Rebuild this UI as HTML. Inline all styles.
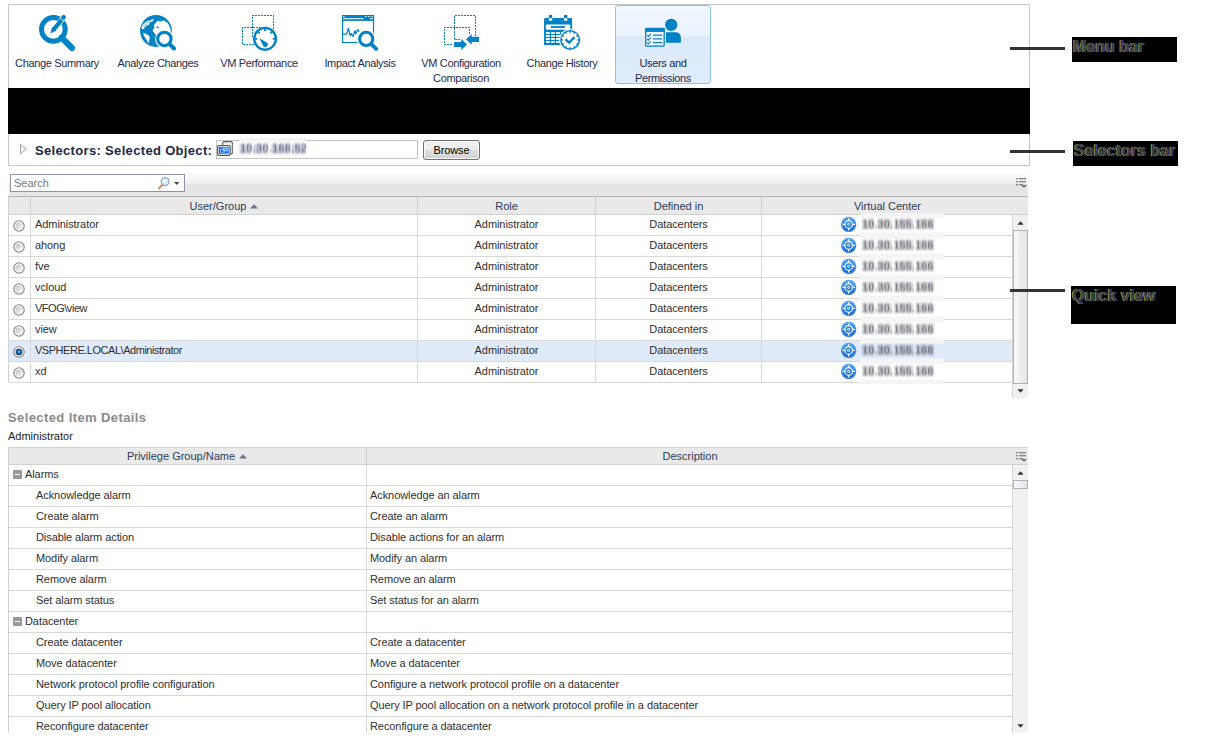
<!DOCTYPE html>
<html>
<head>
<meta charset="utf-8">
<title>Users and Permissions</title>
<style>
html,body{margin:0;padding:0;background:#fff;}
body{width:1206px;height:741px;position:relative;overflow:hidden;font-family:"Liberation Sans",sans-serif;font-size:11px;color:#333;}
.abs{position:absolute;}
/* top frame */
#frame{left:8px;top:4px;width:1020px;height:160px;border:1px solid #c6c6c6;box-sizing:content-box;}
#blackbar{left:8px;top:88px;width:1022px;height:46px;background:#000;}
/* menu */
.mi{top:5px;width:96px;height:79px;box-sizing:border-box;}
.mi svg{position:absolute;left:30px;top:10px;width:36px;height:36px;}
.mi .lb{position:absolute;left:-10px;width:116px;top:51px;text-align:center;line-height:15px;font-size:11px;color:#1f2c4c;letter-spacing:-.35px;}
.mi.sel{border:1px solid #8cc1e6;border-radius:3px;background:linear-gradient(#f1f7ff 0,#eaf3fe 38%,#dceafb 40%,#dfecfc 100%);}
.mi.sel svg{left:29px;top:9px;}
.mi.sel .lb{left:-11px;top:50px;}
/* callouts */
.cl{left:1010px;width:55px;height:3px;background:#333;}
.cb{background:#000;color:#3b3b3b;text-shadow:-.7px 0 0 rgba(235,235,30,.7),.7px 0 0 rgba(40,70,255,.75),.35px 0 0 rgba(255,40,40,.35),-.35px 0 0 rgba(40,230,255,.35);font-weight:bold;font-size:16px;line-height:18px;white-space:nowrap;}
.cb span{position:absolute;left:1px;top:1px;}
/* selectors bar */
#seltxt{left:35px;top:143px;font-size:13px;font-weight:bold;color:#20294a;letter-spacing:.33px;line-height:16px;white-space:nowrap;}
#selinput{left:216px;top:140px;width:200px;height:17px;border:1px solid #c3c3c3;background:#fff;}
#browse{left:423px;top:140px;width:55px;height:18px;border:1px solid #707070;border-radius:3px;background:linear-gradient(#f4f4f4 0,#ececec 48%,#dedede 52%,#d2d2d2 100%);box-shadow:inset 0 0 0 1px #fcfcfc;text-align:center;line-height:18px;font-size:11px;color:#000;letter-spacing:-.15px;}
/* toolbar */
.tb{left:9px;width:1019px;height:25px;background:linear-gradient(#ffffff 0,#f1f1f1 48%,#e4e4e4 52%,#e6e6e6 100%);}
#search{left:10px;top:174px;width:173px;height:16px;border:1px solid #8d94a8;background:#fff;}
#search span{position:absolute;left:3px;top:0;line-height:16px;font-size:11px;color:#777;}
/* grids */
.hdr{background:#e9e9e9;color:#2b3b5c;text-align:center;white-space:nowrap;}
.hc{position:absolute;top:0;height:17px;line-height:18.6px;text-align:center;border-left:1px solid #d2d2d2;box-sizing:border-box;}
.row{left:9px;height:20px;border-bottom:1px solid #d8d8d8;line-height:19px;white-space:nowrap;color:#303030;letter-spacing:-.08px;}
.row div{position:absolute;top:0;height:20px;}
.vl{width:1px;background:#d8d8d8;}
.c{text-align:center;}
.h2 .hc{line-height:16.6px;height:16px;}
.blur{filter:url(#vb);color:#50505c;font-weight:bold;}
.bk{position:absolute;height:10px;filter:blur(.9px);background:repeating-linear-gradient(90deg,rgba(70,70,84,.5) 0,rgba(70,70,84,.5) 1.2px,rgba(70,70,84,.12) 1.2px,rgba(70,70,84,.12) 2.9px);}
</style>
</head>
<body>
<svg width="0" height="0" style="position:absolute"><defs><filter id="vb" x="-10%" y="-70%" width="120%" height="240%"><feGaussianBlur stdDeviation="0.75 1.5"/></filter><linearGradient id="vg" x1="0" y1="0" x2="0" y2="1"><stop offset="0" stop-color="#4da3f5"/><stop offset="1" stop-color="#0a5fd6"/></linearGradient><linearGradient id="rg" x1="0" y1="0" x2="1" y2="1"><stop offset="0" stop-color="#bdbdbd"/><stop offset="1" stop-color="#fdfdfd"/></linearGradient><radialGradient id="rb" cx="0.5" cy="0.45" r="0.55"><stop offset="0" stop-color="#46baf2"/><stop offset="0.45" stop-color="#1c7fc8"/><stop offset="1" stop-color="#0b2f5e"/></radialGradient></defs></svg>
<div class="abs" id="frame"></div>
<div class="abs mi" style="left:9px"><svg viewBox="0 0 36 36" >
<circle cx="14.35" cy="14.3" r="11.85" fill="none" stroke="#0082c6" stroke-width="5"/>
<line x1="22.6" y1="22.6" x2="33" y2="33" stroke="#0082c6" stroke-width="6.1" stroke-linecap="round"/>
<line x1="19" y1="9.4" x2="24.8" y2="2.1" stroke="#fff" stroke-width="5.5" stroke-linecap="round"/>
<line x1="15.2" y1="14" x2="24.7" y2="2.2" stroke="#0082c6" stroke-width="4.3" stroke-linecap="round"/>
<path d="M11.9 17.9 L13.2 12.6 L16.9 15.6 Z" fill="#0082c6" stroke="#0082c6" stroke-width="0.6" stroke-linejoin="round"/>
<line x1="20.9" y1="2.7" x2="25.1" y2="6.1" stroke="#fff" stroke-width="0.9"/>
</svg><div class="lb">Change Summary</div></div>
<div class="abs mi" style="left:110px"><svg viewBox="0 0 36 36" >
<circle cx="16" cy="16" r="15.9" fill="#0082c6"/>
<path d="M1.9 13.8 L1.6 11.4 L3.7 8.5 L7.3 6.1 L10.8 4.9 L13.9 3.9 L13.3 5.8 L10.9 7.3 L8.8 7.6 L9.7 8.8 L7.9 10.3 L5.8 11.4 L4.3 13.2 L3.1 14.4 Z" fill="#fff"/>
<g fill="#0082c6"><rect x="5.2" y="8.6" width="1.2" height="1"/><rect x="7.4" y="7.2" width="1" height="0.9"/><rect x="3.6" y="10.8" width="1.1" height="1"/><rect x="9.6" y="5.8" width="1.2" height="0.8"/><rect x="6.2" y="10" width="0.9" height="0.8"/></g>
<path d="M3.1 18 L5.5 18.5 L9.1 20.8 L9.8 22.7 L8.9 26.9 L8.2 28.2 L6.1 23.9 L4 20.9 Z" fill="#fff"/>
<path d="M15.6 8 L16.8 6.4 L18.6 5.8 L19.8 6.7 L22.2 5.8 L24 5.5 L25.8 6.7 L27.6 7.9 L29 10.2 L30.2 13.2 L30.8 15.6 L31 18 L24 30 L16 20 L13.3 16.8 L12.6 15.6 L13.8 13.8 L14.4 12 L13.8 10.2 L15 8.8 Z" fill="#fff"/>
<path d="M16 11.4 L17.4 11.2 L18.8 12.2 L18.6 13.2 L17 12.8 Z" fill="#0082c6"/>
<circle cx="24.4" cy="23.9" r="9.4" fill="#fff"/>
<line x1="29" y1="28.4" x2="34.2" y2="33.6" stroke="#fff" stroke-width="6" stroke-linecap="round"/>
<circle cx="24.4" cy="23.9" r="6.7" fill="#fff" stroke="#0082c6" stroke-width="3.1"/>
<line x1="29.4" y1="28.9" x2="34" y2="33.5" stroke="#0082c6" stroke-width="4" stroke-linecap="round"/>
</svg><div class="lb">Analyze Changes</div></div>
<div class="abs mi" style="left:211px"><svg viewBox="0 0 36 36" >
<g fill="none" stroke="#0082c6" stroke-width="1" stroke-dasharray="2 1" shape-rendering="crispEdges">
<path d="M11.5 22 L11.5 0.5 L32.5 0.5 L32.5 14"/>
<path d="M20 12.5 L1.5 12.5 L1.5 29.5 L14 29.5"/>
</g>
<circle cx="24.05" cy="23.8" r="12" fill="#fff"/>
<circle cx="24.05" cy="23.8" r="10.9" fill="#fff" stroke="#0082c6" stroke-width="2.4"/>
<g stroke="#0082c6" stroke-width="1.7">
<line x1="24.05" y1="13.6" x2="24.05" y2="16.2"/><line x1="13.8" y1="23.8" x2="16.4" y2="23.8"/><line x1="34.3" y1="23.8" x2="31.7" y2="23.8"/>
<line x1="16.9" y1="16.6" x2="18.7" y2="18.4"/><line x1="31.2" y1="16.6" x2="29.4" y2="18.4"/>
</g>
<path d="M18.3 23.2 L26.2 27.7 A2.5 2.5 0 1 1 22.4 31.2 Z" fill="#0082c6"/>
</svg><div class="lb">VM Performance</div></div>
<div class="abs mi" style="left:312px"><svg viewBox="0 0 36 36" >
<rect x="0.6" y="0.6" width="30.9" height="27" fill="#fff" stroke="#0082c6" stroke-width="1.2"/>
<rect x="0" y="0" width="32.1" height="5.9" fill="#0082c6"/>
<g fill="#fff"><rect x="1" y="1.25" width="1.8" height="0.85"/><rect x="23" y="1.25" width="1.8" height="0.85"/><rect x="26" y="1.25" width="1.8" height="0.85"/><rect x="29" y="1.25" width="1.8" height="0.85"/>
<rect x="1" y="3.2" width="20.5" height="1"/><rect x="28" y="3.2" width="2.8" height="1"/></g>
<path d="M1 19.1 L4.7 19.1 L6.4 13.3 L8.2 20.6 L9.4 18.7 L11.1 21.5 L12.9 15.6 L13.8 18.8 L15.9 14.7 L17.2 16.6" fill="none" stroke="#0082c6" stroke-width="1.3" stroke-linejoin="round"/>
<circle cx="24.2" cy="23.9" r="9.3" fill="#fff"/>
<line x1="29" y1="28.6" x2="34.2" y2="33.9" stroke="#fff" stroke-width="6" stroke-linecap="round"/>
<circle cx="24.2" cy="23.9" r="6.6" fill="#fff" stroke="#0082c6" stroke-width="3.1"/>
<line x1="29.2" y1="28.9" x2="34.1" y2="33.8" stroke="#0082c6" stroke-width="3.9" stroke-linecap="round"/>
</svg><div class="lb">Impact Analysis</div></div>
<div class="abs mi" style="left:413px"><svg viewBox="0 0 36 36" >
<g fill="none" stroke="#0082c6" stroke-width="1" stroke-dasharray="2 1" shape-rendering="crispEdges">
<path d="M32.5 20.6 L32.5 0.5 L11.5 0.5 L11.5 24.5 L18 24.5"/>
<path d="M26.5 19 L26.5 12.5 L1.5 12.5 L1.5 29.5 L10.4 29.5"/>
</g>
<path d="M11.1 27 L18.3 27 L18.3 24.1 L24 29.5 L18.3 34.9 L18.3 32 L11.1 32 Z" fill="#0082c6"/>
<path d="M36.1 21.8 L28.7 21.8 L28.7 18.9 L23 24.35 L28.7 29.8 L28.7 26.9 L36.1 26.9 Z" fill="#0082c6"/>
</svg><div class="lb">VM Configuration<br>Comparison</div></div>
<div class="abs mi" style="left:514px"><svg viewBox="0 0 36 36" >
<path d="M0.05 4.4 Q0.05 3 1.45 3 L26.7 3 Q28.1 3 28.1 4.4 L28.1 30 L0.05 30 Z" fill="#0082c6"/>
<rect x="4.9" y="-0.1" width="3.3" height="3.2" fill="#0082c6"/><rect x="20" y="-0.1" width="3.3" height="3.2" fill="#0082c6"/>
<rect x="4.9" y="3.1" width="3.3" height="2.7" fill="#f2f8fc"/><rect x="20" y="3.1" width="3.3" height="2.7" fill="#f2f8fc"/>
<rect x="1.9" y="9.4" width="24.4" height="5.3" rx="0.8" fill="#fff"/>
<rect x="7" y="11.1" width="13.9" height="1.8" fill="#0082c6"/>
<g fill="#fff"><rect x="1.90" y="17.10" width="3.9" height="1.85"/><rect x="6.95" y="17.10" width="3.9" height="1.85"/><rect x="12.00" y="17.10" width="3.9" height="1.85"/><rect x="17.05" y="17.10" width="3.9" height="1.85"/><rect x="1.90" y="20.07" width="3.9" height="1.85"/><rect x="6.95" y="20.07" width="3.9" height="1.85"/><rect x="12.00" y="20.07" width="3.9" height="1.85"/><rect x="17.05" y="20.07" width="3.9" height="1.85"/><rect x="1.90" y="23.04" width="3.9" height="1.85"/><rect x="6.95" y="23.04" width="3.9" height="1.85"/><rect x="12.00" y="23.04" width="3.9" height="1.85"/><rect x="17.05" y="23.04" width="3.9" height="1.85"/><rect x="1.90" y="26.01" width="3.9" height="1.85"/><rect x="6.95" y="26.01" width="3.9" height="1.85"/><rect x="12.00" y="26.01" width="3.9" height="1.85"/><rect x="17.05" y="26.01" width="3.9" height="1.85"/></g>
<circle cx="26.1" cy="24.95" r="10.9" fill="#fff"/>
<circle cx="26.1" cy="24.95" r="9.3" fill="#fff" stroke="#0082c6" stroke-width="1.4"/>
<g stroke="#0082c6" stroke-width="1.5"><line x1="26.10" y1="15.75" x2="26.10" y2="17.65"/><line x1="30.70" y1="16.98" x2="29.75" y2="18.63"/><line x1="34.07" y1="20.35" x2="32.42" y2="21.30"/><line x1="35.30" y1="24.95" x2="33.40" y2="24.95"/><line x1="34.07" y1="29.55" x2="32.42" y2="28.60"/><line x1="30.70" y1="32.92" x2="29.75" y2="31.27"/><line x1="26.10" y1="34.15" x2="26.10" y2="32.25"/><line x1="21.50" y1="32.92" x2="22.45" y2="31.27"/><line x1="18.13" y1="29.55" x2="19.78" y2="28.60"/><line x1="16.90" y1="24.95" x2="18.80" y2="24.95"/><line x1="18.13" y1="20.35" x2="19.78" y2="21.30"/><line x1="21.50" y1="16.98" x2="22.45" y2="18.63"/></g>
<path d="M21.6 24.4 L25.1 27.7 L30.4 22.1" fill="none" stroke="#0082c6" stroke-width="2.3"/>
</svg><div class="lb">Change History</div></div>
<div class="abs mi sel" style="left:615px"><svg viewBox="0 0 36 36" >
<circle cx="26.2" cy="9.9" r="6.1" fill="#0082c6"/>
<path d="M20.7 17.2 L30.4 17.2 Q35.9 17.2 35.9 22.7 L35.9 27.75 L20.7 27.75 Z" fill="#0082c6"/>
<rect x="19.6" y="12.6" width="1.1" height="19.4" fill="#fff" fill-opacity="0.9"/>
<rect x="0.7" y="13.5" width="18.5" height="17.7" rx="1" fill="#fff" fill-opacity="0.35" stroke="#0082c6" stroke-width="1.3"/>
<rect x="0.3" y="13" width="19.3" height="3.9" fill="#0082c6"/>
<g fill="#0082c6"><rect x="8" y="19.6" width="9.1" height="1.2"/><rect x="8" y="23.3" width="9.1" height="1.2"/><rect x="8" y="27" width="9.1" height="1.2"/></g>
<g fill="none" stroke="#0082c6" stroke-width="1.1"><path d="M2.2 20.2 L3.4 21.4 L5.6 18.9"/><path d="M2.2 23.9 L3.4 25.1 L5.6 22.6"/><path d="M2.2 27.6 L3.4 28.8 L5.6 26.3"/></g>
</svg><div class="lb">Users and<br>Permissions</div></div>
<div class="abs" id="blackbar"></div>

<svg class="abs" style="left:19px;top:143px" width="9" height="12" viewBox="0 0 9 12"><path d="M1.5 1.2 L7 6 L1.5 10.8 Z" fill="#f2f2f2" stroke="#a8a8a8" stroke-width="1"/></svg>
<div class="abs" id="seltxt">Selectors: Selected Object:</div>
<div class="abs" id="selinput"></div>
<svg class="abs" style="left:217px;top:141px" width="17" height="16" viewBox="0 0 17 16">
<rect x="5.8" y="0.6" width="9.5" height="12.4" rx="1.1" fill="#fff" stroke="#5e5e5e" stroke-width="1.1"/>
<rect x="7.2" y="2.4" width="6.6" height="0.8" fill="#dcdcdc"/>
<rect x="0.6" y="4.6" width="12.6" height="9.8" rx="1.4" fill="#fff" stroke="#555" stroke-width="1.2"/>
<linearGradient id="vmg" x1="0" y1="1" x2="1" y2="0"><stop offset="0" stop-color="#0a52de"/><stop offset="1" stop-color="#3f92ff"/></linearGradient>
<rect x="1.9" y="6" width="10" height="6.7" fill="url(#vmg)"/>
<rect x="3.4" y="8.4" width="4" height="2.8" fill="none" stroke="#9fd0ff" stroke-width="0.7"/>
<rect x="6.6" y="7" width="3.6" height="2.8" fill="#4aa0ff" stroke="#b8deff" stroke-width="0.7"/>
</svg>
<div class="abs" style="left:239px;top:138px;width:67px;height:17px;background:linear-gradient(#f3f3f3 0,#f6f6f6 3px,#fdfdfd 4px,#fff 100%)"></div>
<div class="abs blur" style="left:240px;top:142px;line-height:13px;font-size:11px;white-space:nowrap;color:#4a5276;letter-spacing:.25px;opacity:.7">10.30.168.52</div>
<div class="bk" style="left:240px;top:144px;width:11px;background:repeating-linear-gradient(90deg,rgba(70,78,120,.5) 0,rgba(70,78,120,.5) 1.2px,rgba(70,78,120,.12) 1.2px,rgba(70,78,120,.12) 2.9px)"></div><div class="bk" style="left:254px;top:144px;width:13px;background:repeating-linear-gradient(90deg,rgba(70,78,120,.5) 0,rgba(70,78,120,.5) 1.2px,rgba(70,78,120,.12) 1.2px,rgba(70,78,120,.12) 2.9px)"></div><div class="bk" style="left:272px;top:144px;width:17px;background:repeating-linear-gradient(90deg,rgba(70,78,120,.5) 0,rgba(70,78,120,.5) 1.2px,rgba(70,78,120,.12) 1.2px,rgba(70,78,120,.12) 2.9px)"></div><div class="bk" style="left:292px;top:144px;width:13px;background:repeating-linear-gradient(90deg,rgba(70,78,120,.5) 0,rgba(70,78,120,.5) 1.2px,rgba(70,78,120,.12) 1.2px,rgba(70,78,120,.12) 2.9px)"></div>
<div class="abs" id="browse">Browse</div>

<div class="abs tb" style="top:171px"></div>
<div class="abs" id="search"><span>Search</span>
<svg style="position:absolute;left:146px;top:1px" width="15" height="15" viewBox="0 0 15 15"><line x1="1.8" y1="12.6" x2="5.6" y2="8.6" stroke="#d9822b" stroke-width="1.7" stroke-linecap="round"/><circle cx="8.1" cy="5.6" r="3.9" fill="#dcefff" stroke="#8096c8" stroke-width="1.1"/><circle cx="7.5" cy="4.8" r="1.6" fill="#f4faff"/></svg>
<svg style="position:absolute;left:163px;top:7px" width="6" height="4" viewBox="0 0 6 4"><path d="M0 0 L5.4 0 L2.7 3.1 Z" fill="#444"/></svg>
</div>
<svg class="abs" style="left:1016px;top:177px" width="11" height="12" viewBox="0 0 11 12"><g fill="#8a8a8a"><rect x="0" y="1" width="2" height="1.4"/><rect x="3" y="1" width="7" height="1.4"/><rect x="0" y="4" width="2" height="1.4"/><rect x="3" y="4" width="7" height="1.4"/><rect x="0" y="7" width="2" height="1.4"/><rect x="3" y="7" width="4" height="1.4"/></g><path d="M5 8 L11 8 L8 11 Z" fill="#777"/></svg>
<div class="abs" style="left:8px;top:196px;width:1020px;height:1px;background:#b3b3b3"></div>
<div class="abs hdr" style="left:8px;top:197px;width:1020px;height:17px;border-bottom:1px solid #d0d0d0"><div class="hc" style="left:22px;width:387px">User/Group<svg width="8" height="5" viewBox="0 0 8 5" style="margin-left:4px;vertical-align:1px"><path d="M0 4.5 L4 0.3 L8 4.5 Z" fill="#6a7690"/></svg></div><div class="hc" style="left:409px;width:178px">Role</div><div class="hc" style="left:587px;width:166px">Defined in</div><div class="hc" style="left:753px;width:252px">Virtual Center</div></div>
<div class="abs" style="left:8px;top:197px;width:1px;height:186px;background:#d2d2d2"></div>
<div class="abs row" style="top:215px;width:1004px;"><div style="left:0;width:21px"><svg style="position:absolute;left:4px;top:4.5px" width="12" height="12" viewBox="0 0 12 12"><circle cx="6" cy="6" r="5.2" fill="#fdfdfd" stroke="#838383" stroke-width="1.1"/><circle cx="6" cy="6" r="3.6" fill="url(#rg)"/></svg></div><div style="left:26px;">Administrator</div><div class="c" style="left:409px;width:177px">Administrator</div><div class="c" style="left:587px;width:165px">Datacenters</div><div style="left:832px;width:110px"><svg style="position:absolute;left:0;top:1px" width="16" height="17" viewBox="0 0 16 17"><g transform="translate(-0.3,0.4)"><circle cx="8" cy="8" r="7.6" fill="url(#vg)"/><circle cx="8" cy="8" r="6.6" fill="none" stroke="#7fc0ff" stroke-opacity=".45" stroke-width="0.8"/><circle cx="8" cy="8" r="3.8" fill="none" stroke="#fff" stroke-width="1.15"/><circle cx="8" cy="8" r="1.45" fill="#fff"/><circle cx="8" cy="8" r="0.65" fill="#1a6fe0"/><g stroke="#fff" stroke-width="1.25"><line x1="8" y1="1.9" x2="8" y2="4.4"/><line x1="8" y1="11.6" x2="8" y2="14.1"/><line x1="1.9" y1="8" x2="4.4" y2="8"/><line x1="11.6" y1="8" x2="14.1" y2="8"/></g></g></svg></div></div>
<div class="abs" style="left:860px;top:213px;width:84px;height:24px;background:linear-gradient(#f5f5f5 0,#f5f5f5 4px,#fff 5px,#fff 19px,#f5f5f5 20px,#f5f5f5 100%)"></div><div class="abs blur" style="left:862px;top:218px;line-height:13px;white-space:nowrap;font-size:11px;letter-spacing:.1px;opacity:.65">10.30.155.166</div><div class="bk" style="left:863px;top:219px;width:11px"></div><div class="bk" style="left:878px;top:219px;width:13px"></div><div class="bk" style="left:896px;top:219px;width:17px"></div><div class="bk" style="left:917px;top:219px;width:17px"></div>
<div class="abs row" style="top:236px;width:1004px;"><div style="left:0;width:21px"><svg style="position:absolute;left:4px;top:4.5px" width="12" height="12" viewBox="0 0 12 12"><circle cx="6" cy="6" r="5.2" fill="#fdfdfd" stroke="#838383" stroke-width="1.1"/><circle cx="6" cy="6" r="3.6" fill="url(#rg)"/></svg></div><div style="left:26px;">ahong</div><div class="c" style="left:409px;width:177px">Administrator</div><div class="c" style="left:587px;width:165px">Datacenters</div><div style="left:832px;width:110px"><svg style="position:absolute;left:0;top:1px" width="16" height="17" viewBox="0 0 16 17"><g transform="translate(-0.3,0.4)"><circle cx="8" cy="8" r="7.6" fill="url(#vg)"/><circle cx="8" cy="8" r="6.6" fill="none" stroke="#7fc0ff" stroke-opacity=".45" stroke-width="0.8"/><circle cx="8" cy="8" r="3.8" fill="none" stroke="#fff" stroke-width="1.15"/><circle cx="8" cy="8" r="1.45" fill="#fff"/><circle cx="8" cy="8" r="0.65" fill="#1a6fe0"/><g stroke="#fff" stroke-width="1.25"><line x1="8" y1="1.9" x2="8" y2="4.4"/><line x1="8" y1="11.6" x2="8" y2="14.1"/><line x1="1.9" y1="8" x2="4.4" y2="8"/><line x1="11.6" y1="8" x2="14.1" y2="8"/></g></g></svg></div></div>
<div class="abs" style="left:860px;top:234px;width:84px;height:24px;background:linear-gradient(#f5f5f5 0,#f5f5f5 4px,#fff 5px,#fff 19px,#f5f5f5 20px,#f5f5f5 100%)"></div><div class="abs blur" style="left:862px;top:239px;line-height:13px;white-space:nowrap;font-size:11px;letter-spacing:.1px;opacity:.65">10.30.155.166</div><div class="bk" style="left:863px;top:240px;width:11px"></div><div class="bk" style="left:878px;top:240px;width:13px"></div><div class="bk" style="left:896px;top:240px;width:17px"></div><div class="bk" style="left:917px;top:240px;width:17px"></div>
<div class="abs row" style="top:257px;width:1004px;"><div style="left:0;width:21px"><svg style="position:absolute;left:4px;top:4.5px" width="12" height="12" viewBox="0 0 12 12"><circle cx="6" cy="6" r="5.2" fill="#fdfdfd" stroke="#838383" stroke-width="1.1"/><circle cx="6" cy="6" r="3.6" fill="url(#rg)"/></svg></div><div style="left:26px;">fve</div><div class="c" style="left:409px;width:177px">Administrator</div><div class="c" style="left:587px;width:165px">Datacenters</div><div style="left:832px;width:110px"><svg style="position:absolute;left:0;top:1px" width="16" height="17" viewBox="0 0 16 17"><g transform="translate(-0.3,0.4)"><circle cx="8" cy="8" r="7.6" fill="url(#vg)"/><circle cx="8" cy="8" r="6.6" fill="none" stroke="#7fc0ff" stroke-opacity=".45" stroke-width="0.8"/><circle cx="8" cy="8" r="3.8" fill="none" stroke="#fff" stroke-width="1.15"/><circle cx="8" cy="8" r="1.45" fill="#fff"/><circle cx="8" cy="8" r="0.65" fill="#1a6fe0"/><g stroke="#fff" stroke-width="1.25"><line x1="8" y1="1.9" x2="8" y2="4.4"/><line x1="8" y1="11.6" x2="8" y2="14.1"/><line x1="1.9" y1="8" x2="4.4" y2="8"/><line x1="11.6" y1="8" x2="14.1" y2="8"/></g></g></svg></div></div>
<div class="abs" style="left:860px;top:255px;width:84px;height:24px;background:linear-gradient(#f5f5f5 0,#f5f5f5 4px,#fff 5px,#fff 19px,#f5f5f5 20px,#f5f5f5 100%)"></div><div class="abs blur" style="left:862px;top:260px;line-height:13px;white-space:nowrap;font-size:11px;letter-spacing:.1px;opacity:.65">10.30.155.166</div><div class="bk" style="left:863px;top:261px;width:11px"></div><div class="bk" style="left:878px;top:261px;width:13px"></div><div class="bk" style="left:896px;top:261px;width:17px"></div><div class="bk" style="left:917px;top:261px;width:17px"></div>
<div class="abs row" style="top:278px;width:1004px;"><div style="left:0;width:21px"><svg style="position:absolute;left:4px;top:4.5px" width="12" height="12" viewBox="0 0 12 12"><circle cx="6" cy="6" r="5.2" fill="#fdfdfd" stroke="#838383" stroke-width="1.1"/><circle cx="6" cy="6" r="3.6" fill="url(#rg)"/></svg></div><div style="left:26px;">vcloud</div><div class="c" style="left:409px;width:177px">Administrator</div><div class="c" style="left:587px;width:165px">Datacenters</div><div style="left:832px;width:110px"><svg style="position:absolute;left:0;top:1px" width="16" height="17" viewBox="0 0 16 17"><g transform="translate(-0.3,0.4)"><circle cx="8" cy="8" r="7.6" fill="url(#vg)"/><circle cx="8" cy="8" r="6.6" fill="none" stroke="#7fc0ff" stroke-opacity=".45" stroke-width="0.8"/><circle cx="8" cy="8" r="3.8" fill="none" stroke="#fff" stroke-width="1.15"/><circle cx="8" cy="8" r="1.45" fill="#fff"/><circle cx="8" cy="8" r="0.65" fill="#1a6fe0"/><g stroke="#fff" stroke-width="1.25"><line x1="8" y1="1.9" x2="8" y2="4.4"/><line x1="8" y1="11.6" x2="8" y2="14.1"/><line x1="1.9" y1="8" x2="4.4" y2="8"/><line x1="11.6" y1="8" x2="14.1" y2="8"/></g></g></svg></div></div>
<div class="abs" style="left:860px;top:276px;width:84px;height:24px;background:linear-gradient(#f5f5f5 0,#f5f5f5 4px,#fff 5px,#fff 19px,#f5f5f5 20px,#f5f5f5 100%)"></div><div class="abs blur" style="left:862px;top:281px;line-height:13px;white-space:nowrap;font-size:11px;letter-spacing:.1px;opacity:.65">10.30.155.166</div><div class="bk" style="left:863px;top:282px;width:11px"></div><div class="bk" style="left:878px;top:282px;width:13px"></div><div class="bk" style="left:896px;top:282px;width:17px"></div><div class="bk" style="left:917px;top:282px;width:17px"></div>
<div class="abs row" style="top:299px;width:1004px;"><div style="left:0;width:21px"><svg style="position:absolute;left:4px;top:4.5px" width="12" height="12" viewBox="0 0 12 12"><circle cx="6" cy="6" r="5.2" fill="#fdfdfd" stroke="#838383" stroke-width="1.1"/><circle cx="6" cy="6" r="3.6" fill="url(#rg)"/></svg></div><div style="left:26px;letter-spacing:-.47px;">VFOG\view</div><div class="c" style="left:409px;width:177px">Administrator</div><div class="c" style="left:587px;width:165px">Datacenters</div><div style="left:832px;width:110px"><svg style="position:absolute;left:0;top:1px" width="16" height="17" viewBox="0 0 16 17"><g transform="translate(-0.3,0.4)"><circle cx="8" cy="8" r="7.6" fill="url(#vg)"/><circle cx="8" cy="8" r="6.6" fill="none" stroke="#7fc0ff" stroke-opacity=".45" stroke-width="0.8"/><circle cx="8" cy="8" r="3.8" fill="none" stroke="#fff" stroke-width="1.15"/><circle cx="8" cy="8" r="1.45" fill="#fff"/><circle cx="8" cy="8" r="0.65" fill="#1a6fe0"/><g stroke="#fff" stroke-width="1.25"><line x1="8" y1="1.9" x2="8" y2="4.4"/><line x1="8" y1="11.6" x2="8" y2="14.1"/><line x1="1.9" y1="8" x2="4.4" y2="8"/><line x1="11.6" y1="8" x2="14.1" y2="8"/></g></g></svg></div></div>
<div class="abs" style="left:860px;top:297px;width:84px;height:24px;background:linear-gradient(#f5f5f5 0,#f5f5f5 4px,#fff 5px,#fff 19px,#f5f5f5 20px,#f5f5f5 100%)"></div><div class="abs blur" style="left:862px;top:302px;line-height:13px;white-space:nowrap;font-size:11px;letter-spacing:.1px;opacity:.65">10.30.155.166</div><div class="bk" style="left:863px;top:303px;width:11px"></div><div class="bk" style="left:878px;top:303px;width:13px"></div><div class="bk" style="left:896px;top:303px;width:17px"></div><div class="bk" style="left:917px;top:303px;width:17px"></div>
<div class="abs row" style="top:320px;width:1004px;"><div style="left:0;width:21px"><svg style="position:absolute;left:4px;top:4.5px" width="12" height="12" viewBox="0 0 12 12"><circle cx="6" cy="6" r="5.2" fill="#fdfdfd" stroke="#838383" stroke-width="1.1"/><circle cx="6" cy="6" r="3.6" fill="url(#rg)"/></svg></div><div style="left:26px;">view</div><div class="c" style="left:409px;width:177px">Administrator</div><div class="c" style="left:587px;width:165px">Datacenters</div><div style="left:832px;width:110px"><svg style="position:absolute;left:0;top:1px" width="16" height="17" viewBox="0 0 16 17"><g transform="translate(-0.3,0.4)"><circle cx="8" cy="8" r="7.6" fill="url(#vg)"/><circle cx="8" cy="8" r="6.6" fill="none" stroke="#7fc0ff" stroke-opacity=".45" stroke-width="0.8"/><circle cx="8" cy="8" r="3.8" fill="none" stroke="#fff" stroke-width="1.15"/><circle cx="8" cy="8" r="1.45" fill="#fff"/><circle cx="8" cy="8" r="0.65" fill="#1a6fe0"/><g stroke="#fff" stroke-width="1.25"><line x1="8" y1="1.9" x2="8" y2="4.4"/><line x1="8" y1="11.6" x2="8" y2="14.1"/><line x1="1.9" y1="8" x2="4.4" y2="8"/><line x1="11.6" y1="8" x2="14.1" y2="8"/></g></g></svg></div></div>
<div class="abs" style="left:860px;top:318px;width:84px;height:24px;background:linear-gradient(#f5f5f5 0,#f5f5f5 4px,#fff 5px,#fff 19px,#f5f5f5 20px,#f5f5f5 100%)"></div><div class="abs blur" style="left:862px;top:323px;line-height:13px;white-space:nowrap;font-size:11px;letter-spacing:.1px;opacity:.65">10.30.155.166</div><div class="bk" style="left:863px;top:324px;width:11px"></div><div class="bk" style="left:878px;top:324px;width:13px"></div><div class="bk" style="left:896px;top:324px;width:17px"></div><div class="bk" style="left:917px;top:324px;width:17px"></div>
<div class="abs row" style="top:341px;width:1004px;background:#dfeafb;"><div style="left:0;width:21px"><svg style="position:absolute;left:4px;top:4.5px" width="12" height="12" viewBox="0 0 12 12"><circle cx="6" cy="6" r="5.2" fill="#fdfdfd" stroke="#838383" stroke-width="1.1"/><circle cx="6" cy="6" r="3.6" fill="url(#rg)"/><circle cx="6" cy="6" r="3" fill="url(#rb)" stroke="#0c2c58" stroke-width="0.7"/></svg></div><div style="left:26px;letter-spacing:-.47px;">VSPHERE.LOCAL\Administrator</div><div class="c" style="left:409px;width:177px">Administrator</div><div class="c" style="left:587px;width:165px">Datacenters</div><div style="left:832px;width:110px"><svg style="position:absolute;left:0;top:1px" width="16" height="17" viewBox="0 0 16 17"><g transform="translate(-0.3,0.4)"><circle cx="8" cy="8" r="7.6" fill="url(#vg)"/><circle cx="8" cy="8" r="6.6" fill="none" stroke="#7fc0ff" stroke-opacity=".45" stroke-width="0.8"/><circle cx="8" cy="8" r="3.8" fill="none" stroke="#fff" stroke-width="1.15"/><circle cx="8" cy="8" r="1.45" fill="#fff"/><circle cx="8" cy="8" r="0.65" fill="#1a6fe0"/><g stroke="#fff" stroke-width="1.25"><line x1="8" y1="1.9" x2="8" y2="4.4"/><line x1="8" y1="11.6" x2="8" y2="14.1"/><line x1="1.9" y1="8" x2="4.4" y2="8"/><line x1="11.6" y1="8" x2="14.1" y2="8"/></g></g></svg></div></div>
<div class="abs" style="left:860px;top:339px;width:84px;height:24px;background:linear-gradient(#f5f5f5 0,#f5f5f5 4px,#dfeafb 5px,#dfeafb 19px,#f5f5f5 20px,#f5f5f5 100%)"></div><div class="abs blur" style="left:862px;top:344px;line-height:13px;white-space:nowrap;font-size:11px;letter-spacing:.1px;opacity:.65">10.30.155.166</div><div class="bk" style="left:863px;top:345px;width:11px"></div><div class="bk" style="left:878px;top:345px;width:13px"></div><div class="bk" style="left:896px;top:345px;width:17px"></div><div class="bk" style="left:917px;top:345px;width:17px"></div>
<div class="abs row" style="top:362px;width:1004px;"><div style="left:0;width:21px"><svg style="position:absolute;left:4px;top:4.5px" width="12" height="12" viewBox="0 0 12 12"><circle cx="6" cy="6" r="5.2" fill="#fdfdfd" stroke="#838383" stroke-width="1.1"/><circle cx="6" cy="6" r="3.6" fill="url(#rg)"/></svg></div><div style="left:26px;">xd</div><div class="c" style="left:409px;width:177px">Administrator</div><div class="c" style="left:587px;width:165px">Datacenters</div><div style="left:832px;width:110px"><svg style="position:absolute;left:0;top:1px" width="16" height="17" viewBox="0 0 16 17"><g transform="translate(-0.3,0.4)"><circle cx="8" cy="8" r="7.6" fill="url(#vg)"/><circle cx="8" cy="8" r="6.6" fill="none" stroke="#7fc0ff" stroke-opacity=".45" stroke-width="0.8"/><circle cx="8" cy="8" r="3.8" fill="none" stroke="#fff" stroke-width="1.15"/><circle cx="8" cy="8" r="1.45" fill="#fff"/><circle cx="8" cy="8" r="0.65" fill="#1a6fe0"/><g stroke="#fff" stroke-width="1.25"><line x1="8" y1="1.9" x2="8" y2="4.4"/><line x1="8" y1="11.6" x2="8" y2="14.1"/><line x1="1.9" y1="8" x2="4.4" y2="8"/><line x1="11.6" y1="8" x2="14.1" y2="8"/></g></g></svg></div></div>
<div class="abs" style="left:860px;top:360px;width:84px;height:24px;background:linear-gradient(#f5f5f5 0,#f5f5f5 4px,#fff 5px,#fff 19px,#f5f5f5 20px,#f5f5f5 100%)"></div><div class="abs blur" style="left:862px;top:365px;line-height:13px;white-space:nowrap;font-size:11px;letter-spacing:.1px;opacity:.65">10.30.155.166</div><div class="bk" style="left:863px;top:366px;width:11px"></div><div class="bk" style="left:878px;top:366px;width:13px"></div><div class="bk" style="left:896px;top:366px;width:17px"></div><div class="bk" style="left:917px;top:366px;width:17px"></div>
<div class="abs vl" style="left:30px;top:215px;height:168px"></div><div class="abs vl" style="left:417px;top:215px;height:168px"></div><div class="abs vl" style="left:595px;top:215px;height:168px"></div><div class="abs vl" style="left:761px;top:215px;height:168px"></div>
<div class="abs" style="left:1012px;top:215px;width:15px;height:183px;background:#f1f1f1;border-left:1px solid #d6d6d6;box-sizing:content-box"></div><svg class="abs" style="left:1017px;top:221px" width="7" height="4" viewBox="0 0 7 4"><path d="M0.4 3.8 L3.5 0.3 L6.6 3.8 Z" fill="#333"/></svg><svg class="abs" style="left:1017px;top:389px" width="7" height="4" viewBox="0 0 7 4"><path d="M0.4 0.2 L3.5 3.7 L6.6 0.2 Z" fill="#333"/></svg><div class="abs" style="left:1013px;top:230px;width:13px;height:152px;border:1px solid #aab0c0;background:linear-gradient(90deg,#fafafa 0,#eeeeee 50%,#e6e6e6 100%)"></div>

<div class="abs" style="left:8px;top:410px;font-size:13px;font-weight:bold;color:#8b8b8b;letter-spacing:.4px;line-height:16px;white-space:nowrap">Selected Item Details</div>
<div class="abs" style="left:8px;top:430px;line-height:13px;color:#222;white-space:nowrap">Administrator</div>
<div class="abs hdr h2" style="left:8px;top:447px;width:1020px;height:16px;border-top:1px solid #d0d0d0;border-bottom:1px solid #d0d0d0"><div class="hc" style="left:0;width:358px;border-left:0">Privilege Group/Name<svg width="8" height="5" viewBox="0 0 8 5" style="margin-left:4px;vertical-align:1px"><path d="M0 4.5 L4 0.3 L8 4.5 Z" fill="#6a7690"/></svg></div><div class="hc" style="left:358px;width:647px">Description</div></div>
<svg class="abs" style="left:1016px;top:451px" width="11" height="12" viewBox="0 0 11 12"><g fill="#8a8a8a"><rect x="0" y="1" width="2" height="1.4"/><rect x="3" y="1" width="7" height="1.4"/><rect x="0" y="4" width="2" height="1.4"/><rect x="3" y="4" width="7" height="1.4"/><rect x="0" y="7" width="2" height="1.4"/><rect x="3" y="7" width="4" height="1.4"/></g><path d="M5 8 L11 8 L8 11 Z" fill="#777"/></svg>
<div class="abs" style="left:8px;top:448px;width:1px;height:285px;background:#d2d2d2"></div>
<div class="abs" style="left:0;top:465px;width:1030px;height:268px;overflow:hidden"><div class="abs row" style="top:0px;width:1004px"><div style="left:16px"><span style="position:absolute;left:-12px;top:5px;width:9px;height:9px;background:#999;border-radius:1px"><span style="position:absolute;left:2px;top:4px;width:5px;height:1px;background:#fff"></span></span>Alarms</div></div><div class="abs row" style="top:21px;width:1004px"><div style="left:27px">Acknowledge alarm</div><div style="left:361px">Acknowledge an alarm</div></div><div class="abs row" style="top:42px;width:1004px"><div style="left:27px">Create alarm</div><div style="left:361px">Create an alarm</div></div><div class="abs row" style="top:63px;width:1004px"><div style="left:27px">Disable alarm action</div><div style="left:361px">Disable actions for an alarm</div></div><div class="abs row" style="top:84px;width:1004px"><div style="left:27px">Modify alarm</div><div style="left:361px">Modify an alarm</div></div><div class="abs row" style="top:105px;width:1004px"><div style="left:27px">Remove alarm</div><div style="left:361px">Remove an alarm</div></div><div class="abs row" style="top:126px;width:1004px"><div style="left:27px">Set alarm status</div><div style="left:361px">Set status for an alarm</div></div><div class="abs row" style="top:147px;width:1004px"><div style="left:16px"><span style="position:absolute;left:-12px;top:5px;width:9px;height:9px;background:#999;border-radius:1px"><span style="position:absolute;left:2px;top:4px;width:5px;height:1px;background:#fff"></span></span>Datacenter</div></div><div class="abs row" style="top:168px;width:1004px"><div style="left:27px">Create datacenter</div><div style="left:361px">Create a datacenter</div></div><div class="abs row" style="top:189px;width:1004px"><div style="left:27px">Move datacenter</div><div style="left:361px">Move a datacenter</div></div><div class="abs row" style="top:210px;width:1004px"><div style="left:27px">Network protocol profile configuration</div><div style="left:361px">Configure a network protocol profile on a datacenter</div></div><div class="abs row" style="top:231px;width:1004px"><div style="left:27px">Query IP pool allocation</div><div style="left:361px">Query IP pool allocation on a network protocol profile in a datacenter</div></div><div class="abs row" style="top:252px;width:1004px"><div style="left:27px">Reconfigure datacenter</div><div style="left:361px">Reconfigure a datacenter</div></div><div class="abs vl" style="left:366px;top:0;height:268px"></div></div>
<div class="abs" style="left:1012px;top:465px;width:15px;height:268px;background:#f1f1f1;border-left:1px solid #d6d6d6;box-sizing:content-box"></div><svg class="abs" style="left:1017px;top:471px" width="7" height="4" viewBox="0 0 7 4"><path d="M0.4 3.8 L3.5 0.3 L6.6 3.8 Z" fill="#333"/></svg><svg class="abs" style="left:1017px;top:724px" width="7" height="4" viewBox="0 0 7 4"><path d="M0.4 0.2 L3.5 3.7 L6.6 0.2 Z" fill="#333"/></svg><div class="abs" style="left:1013px;top:480px;width:13px;height:7px;border:1px solid #aab0c0;background:linear-gradient(90deg,#fafafa 0,#eeeeee 50%,#e6e6e6 100%)"></div>

<div class="abs cl" style="top:47px"></div><div class="abs cb" style="left:1072px;top:37px;width:105px;height:25px"><span>Menu bar</span></div>
<div class="abs cl" style="top:150px"></div><div class="abs cb" style="left:1073px;top:141px;width:105px;height:25px"><span>Selectors bar</span></div>
<div class="abs cl" style="top:289px"></div><div class="abs cb" style="left:1071px;top:286px;width:105px;height:38px"><span>Quick view</span></div>

</body>
</html>
